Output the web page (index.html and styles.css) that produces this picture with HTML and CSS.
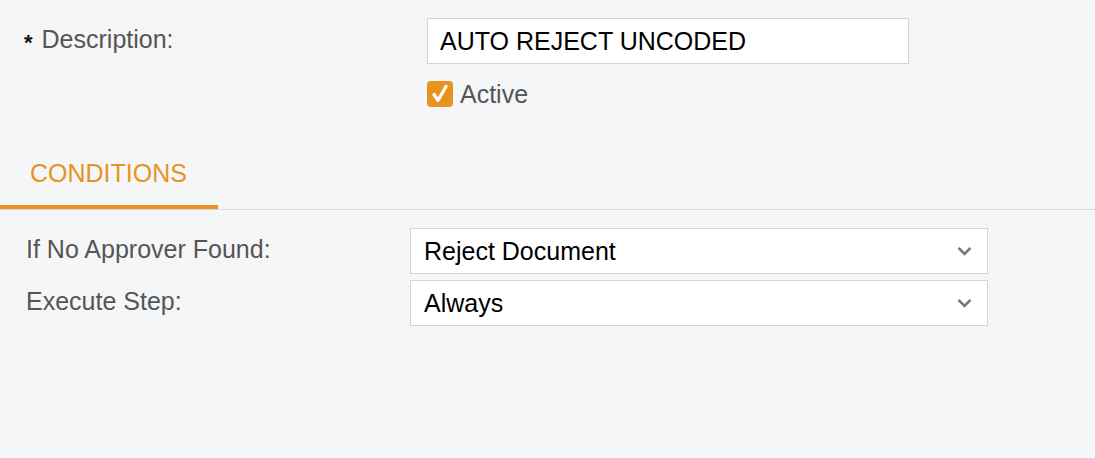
FILE: index.html
```html
<!DOCTYPE html>
<html>
<head>
<meta charset="utf-8">
<link rel="stylesheet" href="styles.css">
</head>
<body>
<div class="top">
  <div class="label-main"><span class="req">*</span>Description:</div>
  <div class="input">AUTO REJECT UNCODED</div>
  <div></div>
  <div class="check-row">
    <span class="checkbox"><svg width="26" height="26" viewBox="0 0 26 26"><path d="M7 13.5 L11 19.5 L19 5.5" fill="none" stroke="#fff" stroke-width="3.2" stroke-linecap="round" stroke-linejoin="round"/></svg></span>
    <span class="check-label">Active</span>
  </div>
</div>
<div class="tabbar">
  <div class="tab">CONDITIONS</div>
</div>
<div class="conditions">
  <div class="row">
    <div class="label">If No Approver Found:</div>
    <div class="select"><span>Reject Document</span><svg class="chev" width="15" height="10" viewBox="0 0 15 10"><path d="M1.5 1.8 L7.5 7.8 L13.5 1.8" fill="none" stroke="#777" stroke-width="2.6"/></svg></div>
  </div>
  <div class="row">
    <div class="label">Execute Step:</div>
    <div class="select"><span>Always</span><svg class="chev" width="15" height="10" viewBox="0 0 15 10"><path d="M1.5 1.8 L7.5 7.8 L13.5 1.8" fill="none" stroke="#777" stroke-width="2.6"/></svg></div>
  </div>
</div>
</body>
</html>
```
FILE: styles.css
```css
html, body {
  margin: 0;
  padding: 0;
  background: #f5f6f8;
  font-family: "Liberation Sans", Arial, sans-serif;
  font-size: 25px;
  color: #000;
}
.top {
  display: grid;
  grid-template-columns: 403px 482px;
  row-gap: 16px;
  padding: 18px 0 0 24px;
  align-items: center;
}
.label-main {
  color: #555;
  line-height: 30px;
  margin-top: -2px;
}
.req {
  color: #111;
  font-size: 22px;
  font-weight: bold;
  margin-right: 9px;
  position: relative;
  top: 2px;
}
.input {
  box-sizing: border-box;
  height: 46px;
  background: #fff;
  border: 1px solid #d3d5d8;
  padding: 0 12px;
  display: flex;
  align-items: center;
  line-height: 30px;
}
.check-row {
  display: flex;
  align-items: center;
  gap: 7px;
  height: 27px;
}
.checkbox {
  width: 26px;
  height: 26px;
  border-radius: 4px;
  background: #e8931f;
  display: flex;
}
.check-label {
  color: #555;
  line-height: 30px;
}
.tabbar {
  margin-top: 24px;
  border-bottom: 1px solid #d5d7da;
  display: flex;
}
.tab {
  width: 218px;
  box-sizing: border-box;
  padding: 27px 0 17px 30px;
  line-height: 30px;
  color: #e8931f;
  border-bottom: 4px solid #e8931f;
}
.conditions {
  padding: 18px 0 0 26px;
  display: flex;
  flex-direction: column;
  gap: 6px;
}
.row {
  display: flex;
  align-items: center;
}
.label {
  width: 384px;
  color: #555;
  line-height: 30px;
  margin-top: -4px;
}
.select {
  box-sizing: border-box;
  width: 578px;
  height: 46px;
  background: #fff;
  border: 1px solid #d3d5d8;
  padding: 0 15px 0 13px;
  display: flex;
  align-items: center;
  justify-content: space-between;
  line-height: 30px;
}
.chev {
  display: block;
}
```
